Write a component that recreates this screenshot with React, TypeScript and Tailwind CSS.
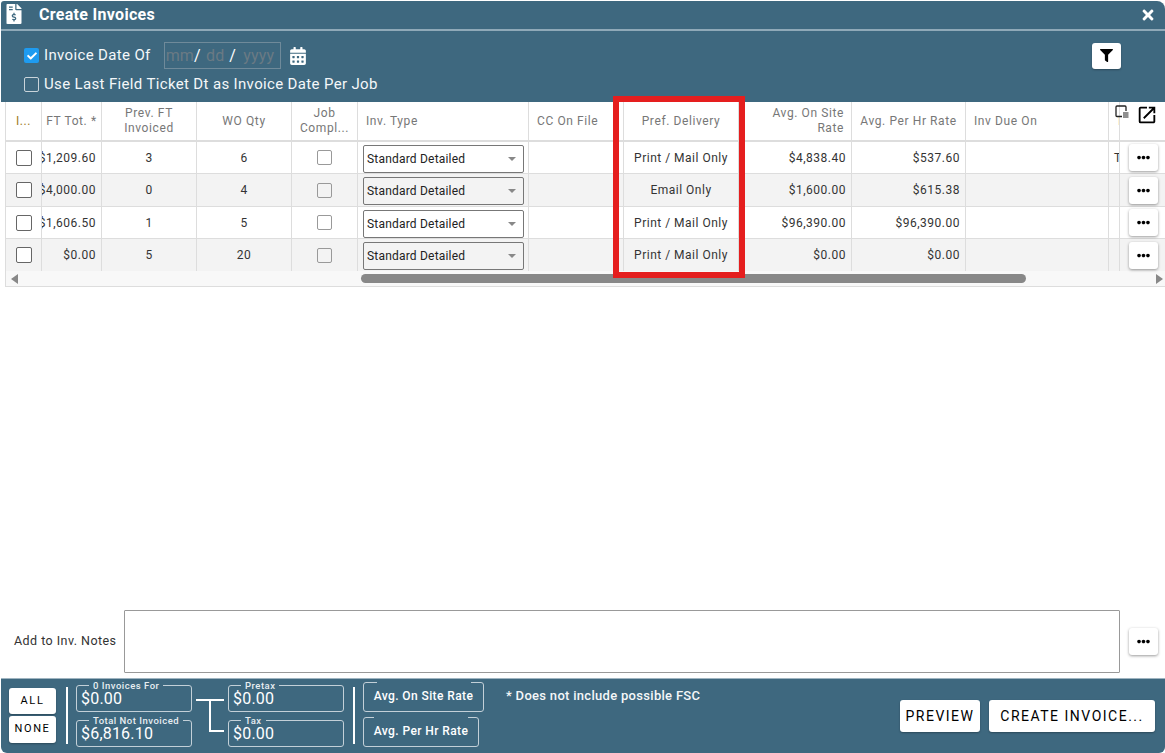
import React from "react";
import { FaFileInvoiceDollar, FaCalendarAlt, FaFilter, FaTimes, FaCheck, FaEllipsisH } from "react-icons/fa";
import { MdOpenInNew } from "react-icons/md";

const W = ["w-[36px]", "w-[60px]", "w-[95px]", "w-[95px]", "w-[66px]", "w-[171px]", "w-[95px]", "w-[115px]", "w-[113px]", "w-[114px]", "w-[143px]", "w-[11px]"];

const rows = [
  { h: "h-[32px]", bg: "bg-white", tot: "$1,209.60", prev: "3", wo: "6", del: "Print / Mail Only", site: "$4,838.40", hr: "$537.60", t: "T" },
  { h: "h-[33px]", bg: "bg-[#f3f3f3]", tot: "$4,000.00", prev: "0", wo: "4", del: "Email Only", site: "$1,600.00", hr: "$615.38", t: "" },
  { h: "h-[32px]", bg: "bg-white", tot: "$1,606.50", prev: "1", wo: "5", del: "Print / Mail Only", site: "$96,390.00", hr: "$96,390.00", t: "" },
  { h: "h-[32px]", bg: "bg-[#f3f3f3]", tot: "$0.00", prev: "5", wo: "20", del: "Print / Mail Only", site: "$0.00", hr: "$0.00", t: "" },
];

function DotsButton() {
  return (
    <div className="w-[29px] h-[27px] bg-white rounded-[3px] shadow-[0_1px_3px_rgba(0,0,0,0.4)] flex items-center justify-center text-black">
      <FaEllipsisH className="text-[13px]" />
    </div>
  );
}

function Head({ i, align = "justify-center text-center", children }: { i: number; align?: string; children: React.ReactNode }) {
  return (
    <div className={`${W[i]} shrink-0 h-full border-r border-[#dddddd] flex items-center ${align} text-[12px] leading-[15px] tracking-[0.6px] text-[#777777] overflow-hidden`}>
      {children}
    </div>
  );
}

function Cell({ i, align = "justify-center", children }: { i: number; align?: string; children?: React.ReactNode }) {
  return (
    <div className={`${W[i]} shrink-0 h-full border-r border-[#dddddd] flex items-center ${align} text-[12px] tracking-[0.5px] text-[#333333] overflow-hidden whitespace-nowrap`}>
      {children}
    </div>
  );
}

function Box({ legend, value, w }: { legend: string; value: string; w: string }) {
  return (
    <fieldset className={`${w} h-[30px] border border-[#c3d0d8] rounded-[3px] px-[3px] min-w-0`}>
      <legend className="ml-[9px] px-[4px] text-[9.5px] leading-[7px] font-medium tracking-[0.5px] text-[#e8eef2] whitespace-nowrap">{legend}</legend>
      <div className="text-[16px] leading-[18px] mt-[1px] pl-[1px] text-white tracking-[0.2px] whitespace-nowrap">{value}</div>
    </fieldset>
  );
}

function RateBox({ label, w }: { label: string; w: string }) {
  return (
    <fieldset className={`${w} h-[30px] border border-[#c3d0d8] rounded-[3px] min-w-0`}>
      <legend className="mx-auto h-[1px] w-[94px] p-0" />
      <div className="text-center text-[12px] leading-[27px] font-medium tracking-[0.4px] text-white whitespace-nowrap">{label}</div>
    </fieldset>
  );
}

function Triangle({ dir }: { dir: "l" | "r" }) {
  return (
    <svg width="8" height="10" viewBox="0 0 8 10" className="shrink-0">
      <path d={dir === "l" ? "M8 0 L1 5 L8 10 Z" : "M0 0 L7 5 L0 10 Z"} fill="#888888" />
    </svg>
  );
}

export default function App() {
  return (
    <div className="relative w-[1165px] h-[753px] overflow-hidden bg-white flex flex-col [font-family:Roboto,sans-serif]">
      {/* Title + filters */}
      <div className="ml-[1px] mt-[1px] bg-[#3e687f] rounded-tr-[8px] rounded-tl-[3px] text-white shrink-0">
        <div className="h-[28px] flex items-center border-b-[2px] border-[#8fa9b8] box-content">
          <FaFileInvoiceDollar className="ml-[5px] text-[20px] w-[16px] mb-[2px]" />
          <span className="ml-[17px] text-[16px] font-bold tracking-[0.3px]">Create Invoices</span>
          <FaTimes className="ml-auto mr-[9px] text-[16px]" />
        </div>
        <div className="h-[71px] pl-[23px] flex flex-col relative">
          <div className="flex items-center h-[27px] mt-[11px]">
            <span className="w-[15px] h-[15px] rounded-[2px] bg-[#1e9bf0] flex items-center justify-center">
              <FaCheck className="text-[10px] text-white" />
            </span>
            <span className="ml-[5px] text-[15px] tracking-[0.35px] text-[#f4f7f9]">Invoice Date Of</span>
            <div className="ml-[13px] w-[117px] h-[27px] border border-[#6f8a9a] flex items-center text-[16px] text-[#6a7a84] pl-[1px] tracking-[0.2px]">
              <span>mm</span><span className="text-white">/</span>
              <span className="ml-[5px]">dd</span><span className="ml-[5px] text-white">/</span>
              <span className="ml-[7px]">yyyy</span>
            </div>
            <FaCalendarAlt className="ml-[8px] text-[18px] text-white" />
            <div className="ml-auto mr-[44px] w-[29px] h-[26px] bg-white rounded-[3px] shadow-[0_1px_2px_rgba(0,0,0,0.3)] flex items-center justify-center">
              <FaFilter className="text-[13px] text-black" />
            </div>
          </div>
          <div className="flex items-center mt-[5px] h-[20px]">
            <span className="w-[15px] h-[15px] rounded-[2px] border border-[#c9d4da]" />
            <span className="ml-[5px] text-[15px] tracking-[0.35px] text-[#f4f7f9]">Use Last Field Ticket Dt as Invoice Date Per Job</span>
          </div>
        </div>
      </div>

      {/* Grid */}
      <div className="ml-[5px] border-l border-b border-[#dddddd] shrink-0 overflow-hidden">
        <div className="flex h-[40px] border-b-[2px] border-[#dddddd] relative">
          <Head i={0}><span className="text-[#a07a1e]">I...</span></Head>
          <Head i={1}>FT Tot. *</Head>
          <Head i={2}>Prev. FT<br />Invoiced</Head>
          <Head i={3}>WO Qty</Head>
          <Head i={4}>Job<br />Compl...</Head>
          <Head i={5} align="justify-start pl-[8px]">Inv. Type</Head>
          <Head i={6} align="justify-start pl-[8px]">CC On File</Head>
          <Head i={7}>Pref. Delivery</Head>
          <Head i={8} align="justify-end text-right pr-[7px]">Avg. On Site<br />Rate</Head>
          <Head i={9} align="justify-center">Avg. Per Hr Rate</Head>
          <Head i={10} align="justify-start pl-[8px]">Inv Due On</Head>
          <Head i={11} align="justify-start pl-[7px]">T</Head>
          <div className="w-[45px] shrink-0 h-full border-l border-[#dddddd] -ml-[1px] bg-white flex items-start pt-[2px] relative">
            <svg width="14" height="14" viewBox="0 0 14 14" className="absolute left-[-5px] top-[3px]" fill="none" stroke="#222222">
              <path d="M7 11.5 H2 a1 1 0 0 1 -1 -1 V2 a1 1 0 0 1 1 -1 H10 a1 1 0 0 1 1 1 V6" strokeWidth="1.3" />
              <path d="M8 8 h5.5 M8 10 h5.5 M8 12 h5.5" strokeWidth="1.2" />
            </svg>
            <MdOpenInNew className="ml-[16px] text-[22px] text-black" />
          </div>
        </div>
        {rows.map((r, idx) => (
          <div key={idx} className={`flex ${r.h} ${r.bg} ${idx < 3 ? "border-b border-[#dddddd]" : ""}`}>
            <Cell i={0}>
              <span className="w-[16px] h-[16px] rounded-[2px] border border-[#666666] bg-white" />
            </Cell>
            <Cell i={1} align="justify-end pr-[5px]">{r.tot}</Cell>
            <Cell i={2}>{r.prev}</Cell>
            <Cell i={3}>{r.wo}</Cell>
            <Cell i={4}>
              <span className="w-[15px] h-[15px] rounded-[2px] border border-[#999999] bg-inherit" />
            </Cell>
            <Cell i={5} align="justify-start pl-[5px]">
              <div className="w-[161px] h-[28px] mt-[2px] border border-[#777777] rounded-[2px] flex items-center pl-[3px] text-[12px] tracking-[0.2px] text-[#222222]">
                Standard Detailed
                <span className="ml-auto mr-[7px] border-x-[4px] border-x-transparent border-t-[4px] border-t-[#888888]" />
              </div>
            </Cell>
            <Cell i={6} />
            <Cell i={7}>{r.del}</Cell>
            <Cell i={8} align="justify-end pr-[5px]">{r.site}</Cell>
            <Cell i={9} align="justify-end pr-[5px]">{r.hr}</Cell>
            <Cell i={10} />
            <Cell i={11} align="justify-start pl-[5px]">{r.t}</Cell>
            <div className="w-[45px] shrink-0 h-full border-l border-[#dddddd] -ml-[1px] flex items-center pl-[9px]">
              <DotsButton />
            </div>
          </div>
        ))}
        <div className="h-[15px] bg-[#f8f8f8] flex items-center pl-[4px] pr-[1px]">
          <Triangle dir="l" />
          <div className="ml-[343px] w-[665px] h-[9px] rounded-full bg-[#888888]" />
          <div className="ml-auto"><Triangle dir="r" /></div>
        </div>
      </div>

      {/* Notes */}
      <div className="flex-1 flex items-end pb-[5px]">
        <div className="flex items-center w-full">
          <span className="ml-[14px] w-[110px] text-[12.5px] tracking-[0.45px] text-[#333333]">Add to Inv. Notes</span>
          <div className="w-[996px] h-[63px] border border-[#999999] rounded-[1px] bg-white" />
          <div className="ml-[9px]"><DotsButton /></div>
        </div>
      </div>

      {/* Footer */}
      <div className="ml-[1px] h-[75px] shrink-0 bg-[#3e687f] rounded-b-[6px] border-t border-[#9fb4c0] flex text-white relative">
        <div className="ml-[8px] mt-[9px] flex flex-col gap-[2px]">
          <div className="w-[47px] h-[26px] bg-white rounded-[3px] shadow-[0_1px_2px_rgba(0,0,0,0.3)] flex items-center justify-center text-[11px] tracking-[1.6px] text-black">ALL</div>
          <div className="w-[47px] h-[27px] bg-white rounded-[3px] shadow-[0_1px_2px_rgba(0,0,0,0.3)] flex items-center justify-center text-[11px] tracking-[1.6px] text-black">NONE</div>
        </div>
        <div className="ml-[10px] mt-[8px] w-[2px] h-[57px] bg-white" />
        <div className="ml-[8px] mt-[3px] flex flex-col gap-[5px]">
          <Box legend="0 Invoices For" value="$0.00" w="w-[116px]" />
          <Box legend="Total Not Invoiced" value="$6,816.10" w="w-[116px]" />
        </div>
        <svg width="32" height="36" viewBox="0 0 32 36" className="mt-[18px] ml-[4px] shrink-0" fill="none" stroke="#ffffff" strokeWidth="2">
          <path d="M0 3 H28 M14 3 V34 H28" />
        </svg>
        <div className="mt-[3px] flex flex-col gap-[5px]">
          <Box legend="Pretax" value="$0.00" w="w-[116px]" />
          <Box legend="Tax" value="$0.00" w="w-[116px]" />
        </div>
        <div className="ml-[9px] mt-[8px] w-[2px] h-[57px] bg-white" />
        <div className="ml-[8px] mt-[3px] flex flex-col gap-[5px] w-[121px]">
          <RateBox label="Avg. On Site Rate" w="w-[121px]" />
          <RateBox label="Avg. Per Hr Rate" w="w-[116px]" />
        </div>
        <div className="ml-[22px] mt-[7px] text-[13px] font-medium tracking-[0.3px] text-[#f4f7f9] whitespace-nowrap">* Does not include possible FSC</div>
        <div className="ml-auto mr-[10px] mt-[21px] flex gap-[9px]">
          <div className="w-[80px] h-[32px] bg-white rounded-[3px] shadow-[0_1px_2px_rgba(0,0,0,0.3)] flex items-center justify-center text-[14px] tracking-[1.5px] text-black">PREVIEW</div>
          <div className="w-[166px] h-[32px] bg-white rounded-[3px] shadow-[0_1px_2px_rgba(0,0,0,0.3)] flex items-center justify-center text-[14px] tracking-[1.5px] text-black">CREATE INVOICE...</div>
        </div>
      </div>

      {/* Annotation */}
      <div className="absolute left-[613px] top-[96px] w-[132px] h-[182px] border-[6px] border-[#e51e1e] pointer-events-none" />
    </div>
  );
}
